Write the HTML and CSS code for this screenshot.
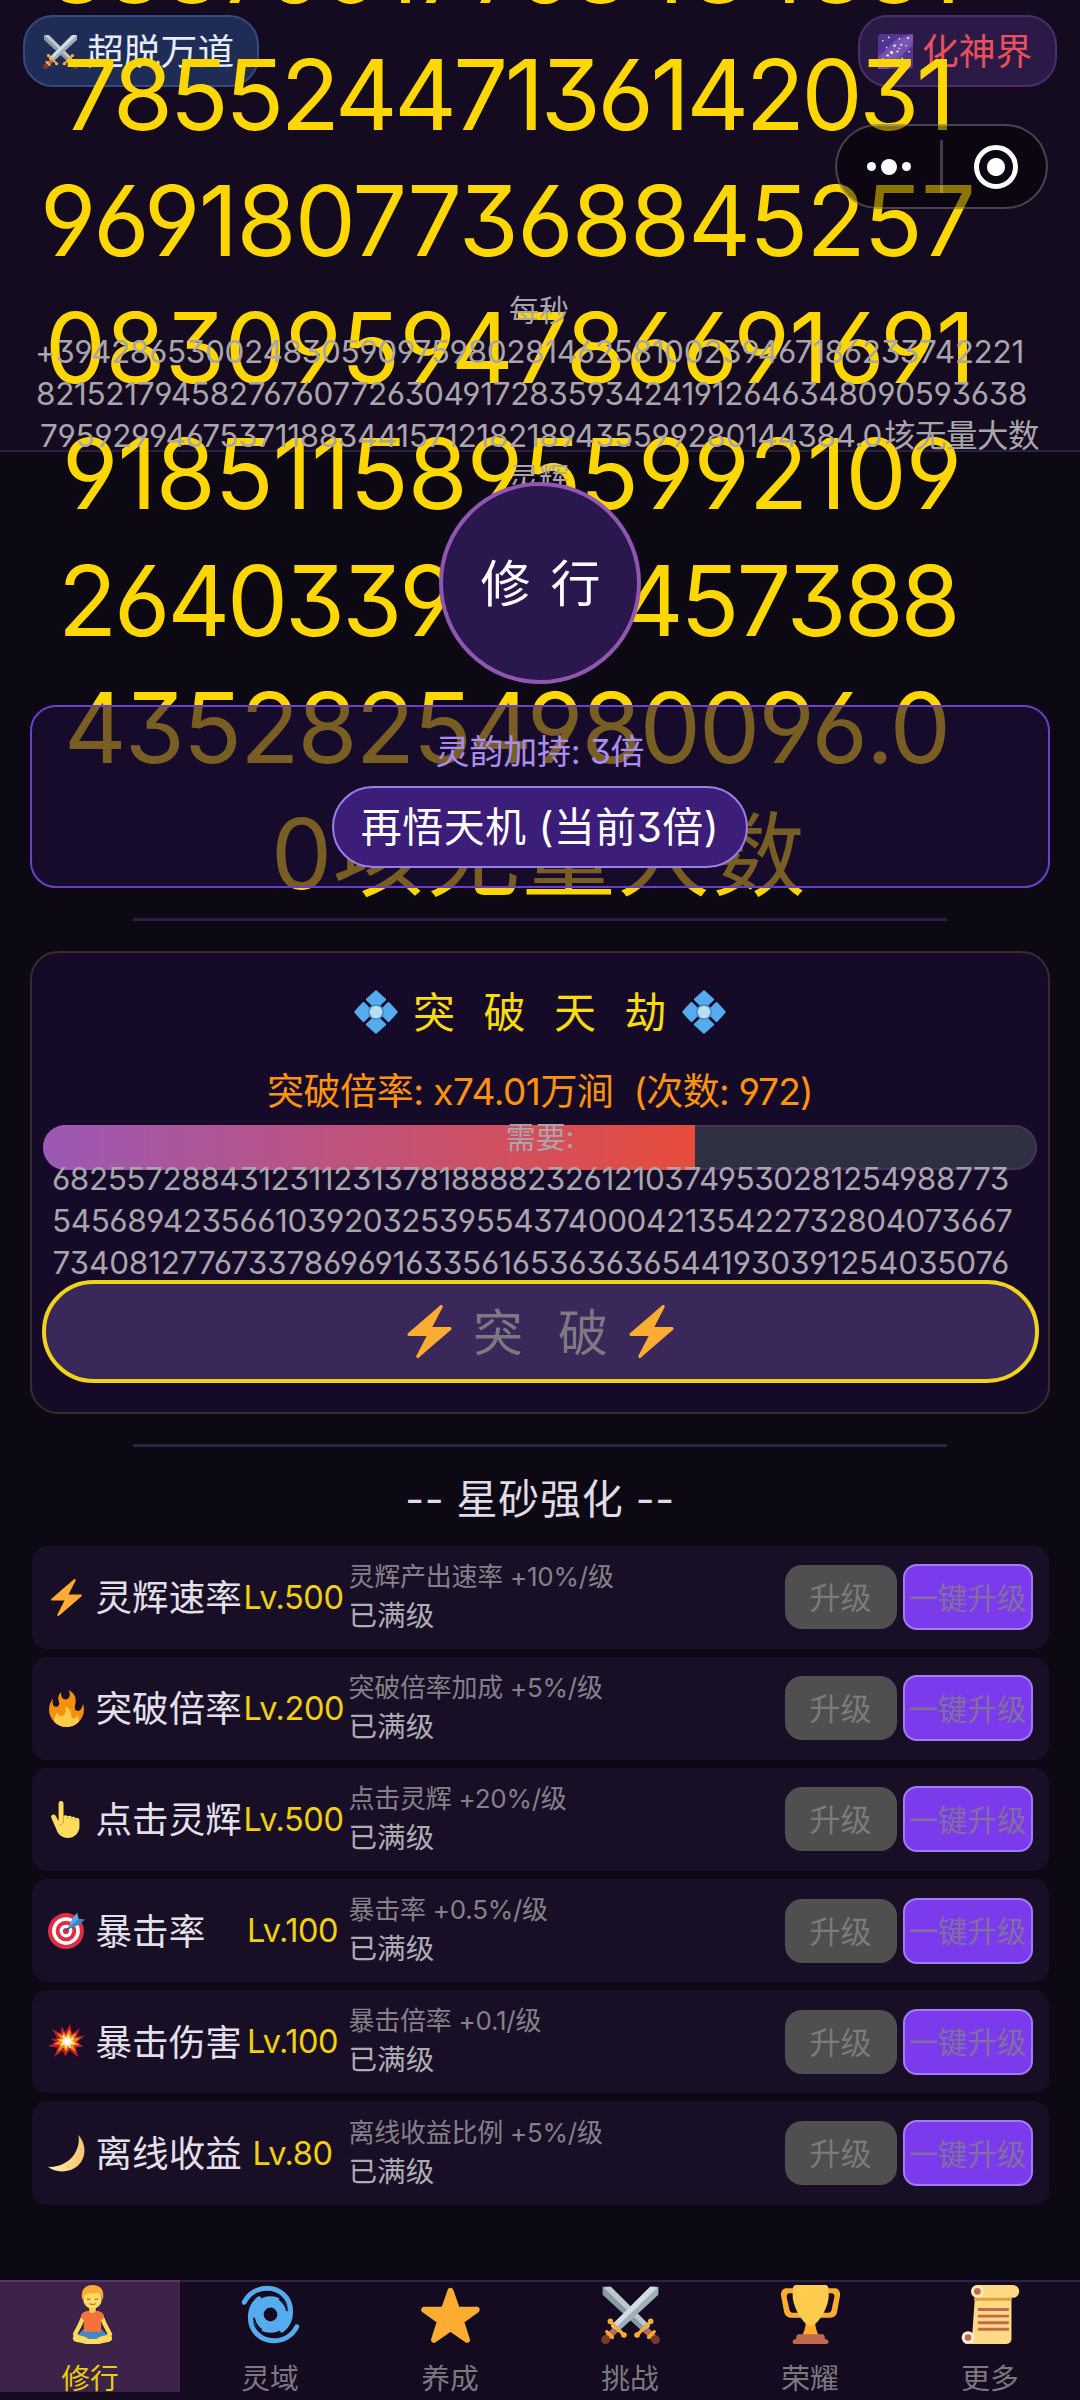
FILE: index.html
```html
<!DOCTYPE html>
<html lang="zh-CN">
<head>
<meta charset="utf-8">
<title>修行</title>
<link rel="stylesheet" href="styles.css">
</head>
<body>
<svg class="defs" width="0" height="0" aria-hidden="true">
  <defs>
    <linearGradient id="g-galaxy" x1="0" y1="0" x2="1" y2="1">
      <stop offset="0" stop-color="#4c3691"/><stop offset=".5" stop-color="#7d59b8"/><stop offset="1" stop-color="#4c3691"/>
    </linearGradient>
    <linearGradient id="g-moon" x1="0" y1="0" x2="1" y2="0">
      <stop offset="0" stop-color="#fff0b8"/><stop offset=".6" stop-color="#ffd983"/><stop offset="1" stop-color="#f2c572"/>
    </linearGradient>
  </defs>
  <symbol id="i-swords" viewBox="0 0 36 36">
    <path fill="#8a9aa4" d="M1 1h5l24 24-4 4L1 6z"/>
    <path fill="#ccd6dd" d="M3 1h3l24 24-2 2L2 2z" opacity=".75"/>
    <path stroke="#c1694f" stroke-width="4" d="M27.5 27.5l5 5"/>
    <path stroke="#ffac33" stroke-width="2" stroke-linecap="round" d="M22 30.5L30.5 22M29 32l3.5-3.5"/>
    <circle cx="22" cy="30.5" r="1.7" fill="#ffac33"/><circle cx="30.3" cy="22.2" r="1.7" fill="#ffac33"/>
    <circle cx="33.2" cy="33.3" r="2.7" fill="#7a3a2a"/>
    <path fill="#9fb0ba" d="M35 1h-5L6 25l4 4L35 6z"/>
    <path fill="#d3dde3" d="M33 1h-3L6 25l2 2L34 2z"/>
    <path stroke="#c1694f" stroke-width="4" d="M8.5 27.5l-5 5"/>
    <path stroke="#ffac33" stroke-width="2" stroke-linecap="round" d="M14 30.5L5.5 22M7 32l-3.5-3.5"/>
    <circle cx="14" cy="30.5" r="1.7" fill="#ffac33"/><circle cx="5.7" cy="22.2" r="1.7" fill="#ffac33"/>
    <circle cx="2.8" cy="33.3" r="2.7" fill="#7a3a2a"/>
  </symbol>
  <symbol id="i-galaxy" viewBox="0 0 36 36">
    <rect width="36" height="36" rx="3.5" fill="#50368f"/>
    <path d="M0 36L0 22C8 20 14 6 22 4L36 0V12C28 16 20 30 10 36z" fill="url(#g-galaxy)"/>
    <g fill="#fff">
      <circle cx="5" cy="7" r=".8"/><circle cx="11" cy="3.500" r=".9"/><circle cx="22" cy="5" r=".8"/><circle cx="31" cy="4" r="1"/>
      <circle cx="9" cy="14" r=".8"/><circle cx="17" cy="12" r="1.200"/><circle cx="24" cy="11" r="1"/><circle cx="29" cy="12" r=".8"/>
      <circle cx="14" cy="19" r="1.500"/><circle cx="20" cy="18" r="1"/><circle cx="10" cy="22" r="1.200"/><circle cx="32" cy="18" r=".9"/>
      <circle cx="5" cy="26" r="1"/><circle cx="13" cy="27" r=".8"/><circle cx="25" cy="25" r=".9"/><circle cx="30" cy="28" r=".8"/>
      <circle cx="19" cy="31" r=".8"/><circle cx="22" cy="15" r=".8"/>
    </g>
  </symbol>
  <symbol id="i-gem" viewBox="0 0 36 36">
    <g fill="#55acee" stroke="#55acee" stroke-width="2.4" stroke-linejoin="round">
      <path d="M18 1.500l7 6.300-7 6.700L11 7.800zM18 21.500l7 6.700-7 6.300-7-6.300zM7.800 11l6.700 7L7.800 25 1.500 18zM28.200 11l6.300 7-6.300 7-6.700-7z"/>
    </g>
    <circle cx="18" cy="18" r="6.400" fill="#3b88c3"/><circle cx="18" cy="18" r="5.200" fill="#bbddf5"/>
  </symbol>
  <symbol id="i-bolt" viewBox="0 0 36 36">
    <path fill="#ffac33" d="M32.938 15.651C32.792 15.260 32.418 15 32 15H19.925L26.890 1.458c.219-.426.106-.947-.271-1.243C26.437.071 26.218 0 26 0c-.233 0-.466.082-.653.243L18 6.588 3.347 19.243c-.316.273-.430.714-.284 1.105S3.582 21 4 21h12.075L9.110 34.542c-.219.426-.106.947.271 1.243.182.144.401.215.619.215.233 0 .466-.082.653-.243L18 29.412l14.653-12.655c.317-.273.430-.714.285-1.106z"/>
  </symbol>
  <symbol id="i-fire" viewBox="0 0 36 36">
    <path fill="#f4900c" d="M35 19c0-2.062-.367-4.039-1.040-5.868-.460 5.389-3.333 8.157-6.335 6.868-2.812-1.208-.917-5.917-.777-8.164.236-3.809-.012-8.169-6.931-11.794 2.875 5.500.333 8.917-2.333 9.125-2.958.231-5.667-2.542-4.667-7.042-3.238 2.386-3.332 6.402-2.333 9 1.042 2.708-.042 4.958-2.583 5.208-2.840.280-4.418-3.041-2.963-8.333C2.520 10.965 1 14.805 1 19c0 9.389 7.611 17 17 17s17-7.611 17-17z"/>
    <path fill="#ffcc4d" d="M28.394 23.999c.148 3.084-2.561 4.293-4.019 3.709-2.106-.843-1.541-2.291-2.083-5.291s-2.625-5.083-5.708-6c2.250 6.333-1.247 8.667-3.080 9.084-1.872.426-3.753-.001-3.968-4.007C7.352 23.668 6 26.676 6 30c0 .368.023.730.055 1.090C9.125 34.124 13.342 36 18 36s8.875-1.876 11.945-4.910c.032-.360.055-.722.055-1.090 0-2.187-.584-4.236-1.606-6.001z"/>
  </symbol>
  <symbol id="i-hand" viewBox="0 0 36 36">
    <path fill="#ffdc5d" d="M10.300 2.500a2.400 2.400 0 0 1 4.800 0V14.500c1-1 3-1 4 .4 1.200-1 3.200-.8 4 .6 1.200-.6 2.800-.2 3.400 1 2-.8 4.100.3 4.100 2.700V25c0 6-5 11-11.500 11-5.500 0-9.500-3.500-11-8.500L3.100 16c-.5-3 3.400-4 4.700-1.200l2.500 5z"/>
    <path fill="none" stroke="#ef9645" stroke-width="1" stroke-linecap="round" d="M15 15v5.500c0 1.500-2 2.500-3.500 2.500M19.200 15.500v1.500M23.300 16v1.500M27 17v1.500"/>
  </symbol>
  <symbol id="i-target" viewBox="0 0 36 36">
    <circle cx="17.500" cy="18.500" r="17.500" fill="#dd2e44"/><circle cx="17.500" cy="18.500" r="13.500" fill="#fff"/>
    <circle cx="17.500" cy="18.500" r="10" fill="#dd2e44"/><circle cx="17.500" cy="18.500" r="6.200" fill="#fff"/>
    <circle cx="17.500" cy="18.500" r="3" fill="#dd2e44"/>
    <path d="M17.500 18.500l9-9" stroke="#226699" stroke-width="1.800"/>
    <path fill="#55acee" d="M20 15.500l3.500-9L28.500.500 29.500 6.500 35.500 7.500 29 13z"/>
    <path fill="#3b88c3" d="M20 15.500L29.500 6.500l6 1L29 13z"/>
  </symbol>
  <symbol id="i-boom" viewBox="0 0 36 36">
    <path fill="#be1931" d="M21.500 1l2 9.500L31 5l-3 8.500 8-1.500-7.500 6.500 6 4.500-7.500.5 2.500 10-8.500-7-4 5.500-3-5L6 33l3.500-9L0 22.500l7.500-4L3 15.500l6-.5L4 5.500 12 10.500l1.500-7L17 9z"/>
    <path fill="#f4900c" d="M21 6l1.500 6.500 5-3-2 5.500 6-1-5 4.500 4.500 3-6 .5 2 6.500-6.500-5-3 4.500-2.500-4.500-6 5 3-7-6.500-1 5.500-3-3-1.500 4.500-1L8.500 9l5.500 3.500 1-4 2.500 3.500z"/>
    <path fill="#ffe8b6" d="M20 10.500l1.500 4.500 4-1.500-2 4 3 3-4.500.5.500 4-3.500-3-2 3-1-4-4 1.500 2-4-3-2 4-.8-1-4.200 4 2.500z"/>
    <circle cx="19" cy="18" r="2.800" fill="#fff"/>
  </symbol>
  <symbol id="i-moon" viewBox="0 0 36 36">
    <path fill="url(#g-moon)" d="M29.600 0C37 8 38 21 29.500 29.500C21 37.500 7 37 0 31C11 31.500 20 27 25.500 19C30 12 30.500 6 29.600 0z"/>
    <circle cx="29" cy="22" r="1.300" fill="#f0c878"/><circle cx="31.500" cy="14" r="1" fill="#f0c878"/><circle cx="20" cy="31" r="1.300" fill="#f0c878"/>
  </symbol>
  <symbol id="i-lotus" viewBox="0 0 36 36">
    <path fill="none" stroke="#ffdc5d" stroke-width="2.600" stroke-linecap="round" stroke-linejoin="round" d="M12.800 18.500L10.500 24 7.300 30M23.200 18.500L25.500 24 28.700 30"/>
    <path fill="#ffdc5d" d="M6 32.500c0-1.500 1.500-2.500 3.500-2.500h17c2 0 3.500 1 3.500 2.500 0 2-2.500 2.500-5 2.700L22 36h-8l-3-.8c-2.500-.2-5-.7-5-2.700z"/>
    <path fill="#4289c1" d="M12.500 27h11l3.500 3.500c-3 .5-5 1-6.500 2.500h-5C14 31.500 12 31 9 30.500z"/>
    <path fill="#f4733b" d="M11 20c0-2.800 1.800-4.200 4.500-4.200h5c2.700 0 4.500 1.400 4.500 4.200l-1.700 1.500V28.500H12.700V21.500z"/>
    <path fill="#f9ca55" d="M16 12.500h4V16c-1 1.500-3 1.500-4 0z"/>
    <ellipse cx="18" cy="8.500" rx="5.700" ry="6" fill="#ffdc5d"/>
    <path fill="#ffac33" d="M11.700 9C10.500 2.500 14 0 18 0c4.200 0 7.700 2.500 6.300 9-.8-1.500-1-3.500-2-4.200-3 .7-5 .5-7 .2-1.700.5-2.500 2-3.600 4z"/>
    <path fill="none" stroke="#c1694f" stroke-width=".7" stroke-linecap="round" d="M14.800 8.500q.8.600 1.600 0M19.600 8.500q.8.600 1.600 0M16.300 11.400q1.700 1 3.400 0"/>
  </symbol>
  <symbol id="i-cyclone" viewBox="0 0 36 36">
    <circle cx="18" cy="18" r="7.700" fill="none" stroke="#55acee" stroke-width="7"/>
    <path fill="none" stroke="#55acee" stroke-width="3" stroke-linecap="round" d="M2 10.500C5 4.800 10.500 2 16 2c8 0 14.300 6 14.300 14.200 0 5-2 8.800-5.300 11.300"/>
    <path fill="none" stroke="#55acee" stroke-width="3" stroke-linecap="round" d="M34 25.500C31 31.200 25.500 34 20 34 12 34 5.700 28 5.700 19.800c0-5 2-8.800 5.300-11.300"/>
    <path fill="none" stroke="#140b20" stroke-width="1.200" stroke-linecap="round" d="M28 15.500c-.6-2.800-2-5-4.300-6.700M8 20.500c.6 2.800 2 5 4.300 6.700"/>
  </symbol>
  <symbol id="i-star" viewBox="0 0 36 36">
    <path fill="#ffac33" stroke="#ffac33" stroke-width="3.600" stroke-linejoin="round" d="M18 3.500l4 11.500 12 .1-9.600 7 3.700 11.400L18 26.500 7.900 33.500l3.700-11.400L2 15.100 14 15z"/>
  </symbol>
  <symbol id="i-trophy" viewBox="0 0 36 36">
    <path fill="#ffac33" d="M5.123 5h6C12.227 5 13 4.896 13 6V4c0-1.104-.773-2-1.877-2h-8c-2 0-3.583 2.125-3 5 0 0 1.791 9.375 1.917 9.958C2.373 18.500 4.164 20 6.081 20h6.958c1.105 0-.039-1.896-.039-3v-2c0 1.104-.773 2-1.877 2h-4c-1.104 0-1.833-1.042-2-2S3.539 7.667 3.539 7.667C3.206 5.750 4.018 5 5.123 5zm25.812 0h-6C23.831 5 22 4.896 22 6V4c0-1.104 1.831-2 2.935-2h8c2 0 3.584 2.125 3 5 0 0-1.633 9.419-1.771 10-.354 1.500-2.042 3-4 3h-7.146C21.914 20 22 18.104 22 17v-2c0 1.104 1.831 2 2.935 2h4c1.104 0 1.834-1.042 2-2s1.584-7.333 1.584-7.333C32.851 5.750 32.040 5 30.935 5zM20.832 22c0-6.958-2.709 0-2.709 0s-3-6.958-3 0-3.291 10-3.291 10h12.292c-.001 0-3.292-3.042-3.292-10z"/>
    <path fill="#ffcc4d" d="M29.123 6.577c0 6.775-6.770 18.423-11 18.423-4.231 0-11-11.649-11-18.423 0-5.774 0-6.577 3-6.577h16c3 0 3 .804 3 6.577z"/>
    <path fill="#c1694f" d="M11 30h14c1.300 0 1.800.8 1.800 3 1.300 0 2.200.7 2.200 1.700S28.500 36 27.500 36h-19C7.500 36 7 35.500 7 34.700S8 33 9.200 33c0-2.200.5-3 1.800-3z"/>
  </symbol>
  <symbol id="i-scroll" viewBox="0 0 36 36">
    <path fill="#ffd983" d="M6.500 3h22v30a3 3 0 0 1-3 3H3.500L4.500 31z" transform="translate(2.300 0)"/>
    <circle cx="4.300" cy="32.100" r="3.900" fill="#fff0d5"/><circle cx="4.300" cy="32.100" r="2" fill="#c1694f"/>
    <rect x="7" y="0" width="28.500" height="7.800" rx="3.900" fill="#ffd983"/>
    <rect x="8" y="7.800" width="22.800" height="1.800" fill="#e39f3d"/>
    <path fill="#ffe8b6" d="M10 0a3.900 3.900 0 1 1-3.900 3.900A3.900 3.900 0 0 1 10 0z"/><circle cx="10" cy="3.900" r="2" fill="#c1694f"/>
    <path stroke="#c1694f" stroke-width="1.800" stroke-linecap="round" d="M11 15h17.500M11 19h17.500M11 23h17.500M11 27h17.500"/>
  </symbol>
</svg>

<div class="page">
  <header class="top">
    <div class="pills">
      <div class="pill pill-rank"><svg class="ico-pill"><use href="#i-swords"/></svg><span>超脱万道</span></div>
      <div class="pill pill-realm"><svg class="ico-pill"><use href="#i-galaxy"/></svg><span>化神界</span></div>
    </div>
    <div class="total">
      <p>88876017768484881</p>
      <p>78552447136142031</p>
      <p>96918077368845257</p>
      <p>08309594786691691</p>
      <p>91851158955992109</p>
      <p>2640339860457388</p>
      <p>43528254980096.0</p>
      <p>0<span class="unit">垓无量大数</span></p>
    </div>
    <div class="rate">
      <p class="mid">每秒</p>
      <p>+39428653002483059097598028146258100239467186233742221</p>
      <p>8215217945827676077263049172835934241912646348090593638</p>
      <p>7959299467537118834415712182189435599280144384.0<span class="unit">垓无量大数</span></p>
      <p class="mid">灵辉</p>
    </div>
    <div class="capsule">
      <span class="dots"><i></i><i></i><i></i></span>
      <span class="bar"></span>
      <span class="ring"></span>
    </div>
  </header>

  <main class="main">
    <button class="train">修行</button>

    <section class="boost">
      <div class="boost-text">灵韵加持: 3倍</div>
      <button class="boost-btn">再悟天机 (当前3倍)</button>
    </section>

    <div class="rule"></div>

    <section class="trial">
      <h2><svg class="gem"><use href="#i-gem"/></svg><span>突破天劫</span><svg class="gem"><use href="#i-gem"/></svg></h2>
      <div class="mult"><span>突破倍率: x74.01万涧</span><span class="times">(次数: 972)</span></div>
      <div class="progress">
        <div class="fill" style="width:65.600%"></div>
        <div class="need">
          <p class="mid">需要:</p>
          <p>682557288431231123137818888232612103749530281254988773</p>
          <p>5456894235661039203253955437400042135422732804073667</p>
          <p>73408127767337869691633561653636365441930391254035076</p>
        </div>
      </div>
      <button class="break"><svg class="bolt"><use href="#i-bolt"/></svg><span>突破</span><svg class="bolt"><use href="#i-bolt"/></svg></button>
    </section>

    <div class="rule rule-2"></div>
    <h3 class="title">-- 星砂强化 --</h3>

    <ul class="list">
      <li><svg class="ico"><use href="#i-bolt"/></svg><span class="name">灵辉速率</span><span class="lv">Lv.500</span><div class="info"><p>灵辉产出速率 +10%/级</p><p>已满级</p></div><button class="up">升级</button><button class="max">一键升级</button></li>
      <li><svg class="ico"><use href="#i-fire"/></svg><span class="name">突破倍率</span><span class="lv">Lv.200</span><div class="info"><p>突破倍率加成 +5%/级</p><p>已满级</p></div><button class="up">升级</button><button class="max">一键升级</button></li>
      <li><svg class="ico"><use href="#i-hand"/></svg><span class="name">点击灵辉</span><span class="lv">Lv.500</span><div class="info"><p>点击灵辉 +20%/级</p><p>已满级</p></div><button class="up">升级</button><button class="max">一键升级</button></li>
      <li><svg class="ico"><use href="#i-target"/></svg><span class="name">暴击率</span><span class="lv">Lv.100</span><div class="info"><p>暴击率 +0.5%/级</p><p>已满级</p></div><button class="up">升级</button><button class="max">一键升级</button></li>
      <li><svg class="ico"><use href="#i-boom"/></svg><span class="name">暴击伤害</span><span class="lv">Lv.100</span><div class="info"><p>暴击倍率 +0.1/级</p><p>已满级</p></div><button class="up">升级</button><button class="max">一键升级</button></li>
      <li><svg class="ico"><use href="#i-moon"/></svg><span class="name">离线收益</span><span class="lv">Lv.80</span><div class="info"><p>离线收益比例 +5%/级</p><p>已满级</p></div><button class="up">升级</button><button class="max">一键升级</button></li>
    </ul>
  </main>

  <nav class="tabs">
    <a class="tab on"><svg><use href="#i-lotus"/></svg><span>修行</span></a>
    <a class="tab"><svg><use href="#i-cyclone"/></svg><span>灵域</span></a>
    <a class="tab"><svg><use href="#i-star"/></svg><span>养成</span></a>
    <a class="tab"><svg><use href="#i-swords"/></svg><span>挑战</span></a>
    <a class="tab"><svg><use href="#i-trophy"/></svg><span>荣耀</span></a>
    <a class="tab"><svg><use href="#i-scroll"/></svg><span>更多</span></a>
  </nav>
</div>
</body>
</html>
```
FILE: styles.css
```css
* { box-sizing: border-box; margin: 0; padding: 0; }

body {
  background: #0c0915;
  font-family: Inter, "Noto Sans CJK SC", sans-serif;
  font-feature-settings: "cv03", "cv04", "cv09";
  color: #e4e0ea;
}

button {
  font: inherit;
  font-feature-settings: inherit;
  color: inherit;
  border: 0;
  background: none;
  white-space: nowrap;
}

svg { display: block; flex: none; }
.defs { position: absolute; }

.page {
  width: 1080px;
  height: 2400px;
  display: flex;
  flex-direction: column;
  position: relative;
  overflow: hidden;
}

/* header */
.top {
  position: relative;
  height: 452px;
  flex: none;
  padding-top: 15px;
  background: #140b20;
  border-bottom: 2px solid #2a2040;
}

.pills {
  display: flex;
  justify-content: space-between;
  padding: 0 23px;
}

.pill {
  height: 72px;
  border-radius: 30px;
  border: 2px solid;
  display: flex;
  align-items: center;
  gap: 9px;
  font-size: 36.800px;
}
.pill span { padding-bottom: 5px; }
.pill-rank { width: 236px; padding-left: 18px; background: #1f2c55; border-color: #36497f; color: #e3ecfb; }
.pill-realm { width: 199px; padding-left: 18px; background: #2b1948; border-color: #4d2c6c; color: #e8505a; }
.ico-pill { width: 35px; height: 35px; }

/* the total spills over the header and the panels below it */
.total {
  position: absolute;
  left: 0;
  top: -95px;
  z-index: 1;
  color: #ffd700;
  font-size: 97px;
  line-height: 126.600px;
  white-space: nowrap;
}
.total p:nth-child(1) { padding-left: 47px; letter-spacing: -2.400px; }
.total p:nth-child(2) { padding-left: 63px; letter-spacing: -3.440px; }
.total p:nth-child(3) { padding-left: 40px; letter-spacing: -1.760px; }
.total p:nth-child(4) { padding-left: 45px; letter-spacing: -.570px; }
.total p:nth-child(5) { padding-left: 62px; letter-spacing: -1px; }
.total p:nth-child(6) { padding-left: 58px; letter-spacing: -3.080px; }
.total p:nth-child(7) { padding-left: 64px; letter-spacing: -1.860px; }
.total p:nth-child(8) { padding-left: 271px; }
.total .unit { font-size: 93px; line-height: 1; letter-spacing: 2px; }

.rate {
  position: relative;
  z-index: 2;
  margin-top: 202px;
}
.rate, .need {
  color: #aaa5ad;
  font-size: 31.500px;
  line-height: 42.100px;
  white-space: nowrap;
}
.rate .mid, .need .mid { text-align: center; font-size: 30px; }
.rate .mid { padding-right: 2px; }
.rate p:nth-child(2) { padding-left: 35px; letter-spacing: -.330px; }
.rate p:nth-child(3) { padding-left: 36px; letter-spacing: -.330px; }
.rate p:nth-child(4) { padding-left: 40px; letter-spacing: -.370px; }
.rate .unit { letter-spacing: -.500px; margin-left: 2px; }

.capsule {
  position: absolute;
  z-index: 5;
  left: 835px;
  top: 124px;
  width: 213px;
  height: 85px;
  border-radius: 43px;
  border: 2px solid rgba(255, 255, 255, .25);
  background: rgba(0, 0, 0, .45);
  display: flex;
  align-items: center;
}
.dots { width: 103px; display: flex; align-items: center; justify-content: center; gap: 5px; }
.dots i { width: 9px; height: 9px; border-radius: 50%; background: #fff; }
.dots i:nth-child(2) { width: 16px; height: 16px; }
.bar { width: 3px; height: 53px; background: rgba(255, 255, 255, .22); }
.ring {
  width: 44px;
  height: 44px;
  margin-left: 31px;
  border-radius: 50%;
  border: 5px solid #fff;
  background: radial-gradient(circle, #fff 8.500px, transparent 9.500px);
}

/* content */
.main {
  position: relative;
  z-index: 3;
  flex: 1;
  padding: 30px 30px 0;
  display: flex;
  flex-direction: column;
  align-items: center;
}

.train {
  width: 202px;
  height: 202px;
  flex: none;
  border-radius: 50%;
  border: 4px solid #8f57b0;
  background: #2a174e;
  color: #fff;
  font-size: 50px;
  letter-spacing: 20px;
  padding: 0 0 7px 21px;
}

.boost {
  width: 1020px;
  height: 183px;
  flex: none;
  margin-top: 21px;
  border: 2px solid #6d3fc8;
  border-radius: 26px;
  background: rgba(32, 14, 59, .6);
  background-clip: padding-box;
  display: flex;
  flex-direction: column;
  align-items: center;
}
.boost-text {
  margin-top: 25px;
  font-size: 34px;
  line-height: 40px;
  letter-spacing: -.200px;
  color: #a98df0;
}
.boost-btn {
  width: 416px;
  height: 82px;
  margin-top: 14px;
  padding-bottom: 6px;
  border: 2px solid #9b7fe8;
  border-radius: 41px;
  background: #3c1d7a;
  color: #fff;
  font-size: 41px;
  letter-spacing: .400px;
}

.rule { width: 814px; height: 3px; flex: none; margin-top: 30px; background: #2a1f40; }

.trial {
  width: 1020px;
  height: 463px;
  flex: none;
  margin-top: 30px;
  border: 2px solid #3a2a28;
  border-radius: 28px;
  background: #150b29;
  display: flex;
  flex-direction: column;
  align-items: center;
}
.trial h2 {
  margin-top: 31px;
  height: 56px;
  display: flex;
  align-items: center;
  font-size: 42px;
  font-weight: 400;
  color: #f8dc0c;
}
.trial h2 span { letter-spacing: 28.500px; margin: 0 -13px 0 15px; padding-bottom: 6px; }
.gem { width: 44px; height: 44px; }
.mult {
  margin-top: 30px;
  width: 100%;
  padding-left: 235px;
  display: flex;
  font-size: 37px;
  line-height: 44px;
  letter-spacing: -.450px;
  color: #ff930f;
}
.times { margin-left: 20px; letter-spacing: -.700px; }

.progress {
  position: relative;
  width: 994px;
  height: 45px;
  flex: none;
  margin-top: 11px;
  border-radius: 23px;
  background: #2f3142;
  box-shadow: inset 0 0 0 2px #47305c;
}
.fill { height: 100%; border-radius: 23px 0 0 23px; background: linear-gradient(90deg, #9b59b6, #e74c3c); }
.need { position: absolute; left: -13px; top: -9px; width: 1020px; }
.need p:nth-child(2) { padding-left: 22px; letter-spacing: -.450px; }
.need p:nth-child(3) { padding-left: 22px; letter-spacing: -.430px; }
.need p:nth-child(4) { padding-left: 22.500px; letter-spacing: -.180px; }

.break {
  width: 997px;
  height: 103px;
  flex: none;
  margin: 110px 0 0 1px;
  position: relative;
  border: 4px solid #f0d31a;
  border-radius: 52px;
  background: #3a285a;
  color: #7d7881;
  font-size: 50px;
  display: flex;
  align-items: center;
  justify-content: center;
}
.break span { letter-spacing: 35px; margin: 0 -18px 0 17px; padding-bottom: 6px; }
.bolt { width: 53px; height: 53px; }

.rule-2 { background: #28233f; }

.title {
  height: 98.500px;
  flex: none;
  font-size: 41px;
  font-weight: 400;
  letter-spacing: .700px;
  line-height: 104px;
  color: #e0dce6;
}

.list {
  width: 1017px;
  list-style: none;
  display: flex;
  flex-direction: column;
  gap: 8px;
}
.list li {
  height: 103.200px;
  border-radius: 15px;
  background: #180f26;
  display: flex;
  align-items: center;
  padding-left: 16px;
}
.ico { width: 37px; height: 37px; }
.name { width: 148px; margin-left: 11px; padding-bottom: 3px; font-size: 36.600px; white-space: nowrap; }
.lv { width: 98px; margin-left: 0; text-align: center; font-size: 32.500px; letter-spacing: -.450px; white-space: nowrap; color: #f0d010; }
.info { width: 438px; margin-left: 5px; padding: 3px 0 0 2px; }
.info p:first-child { font-size: 26px; line-height: 34px; letter-spacing: -.250px; color: #858089; }
.info p:last-child { font-size: 28.600px; line-height: 44px; color: #b0acb5; }
.up { width: 112px; height: 64px; padding-bottom: 3px; border-radius: 17px; background: #4f4f4f; color: #7b7b7b; font-size: 31px; }
.max { width: 130px; height: 66px; margin-left: 6px; padding-bottom: 3px; border-radius: 14px; border: 2px solid #a37cf5; background: #7c3aed; color: #7f70a0; font-size: 29.400px; }

/* bottom navigation */
.tabs {
  position: relative;
  z-index: 4;
  height: 120px;
  flex: none;
  display: flex;
  background: #140b20;
  box-shadow: inset 0 2px #2e2344;
}
.tab {
  width: 180px;
  height: 112px;
  display: flex;
  flex-direction: column;
  align-items: center;
  font-size: 28.800px;
  color: #7d7880;
}
.tab.on { background: #3d2249; color: #e8cc10; box-shadow: inset 0 2px #56346a; }
.tab svg { width: 59px; height: 59px; margin: 5px 0 0 4px; }
.tab span { margin-top: 13.500px; line-height: 42px; }
.tab:not(.on) svg { margin-left: 0; }
```
